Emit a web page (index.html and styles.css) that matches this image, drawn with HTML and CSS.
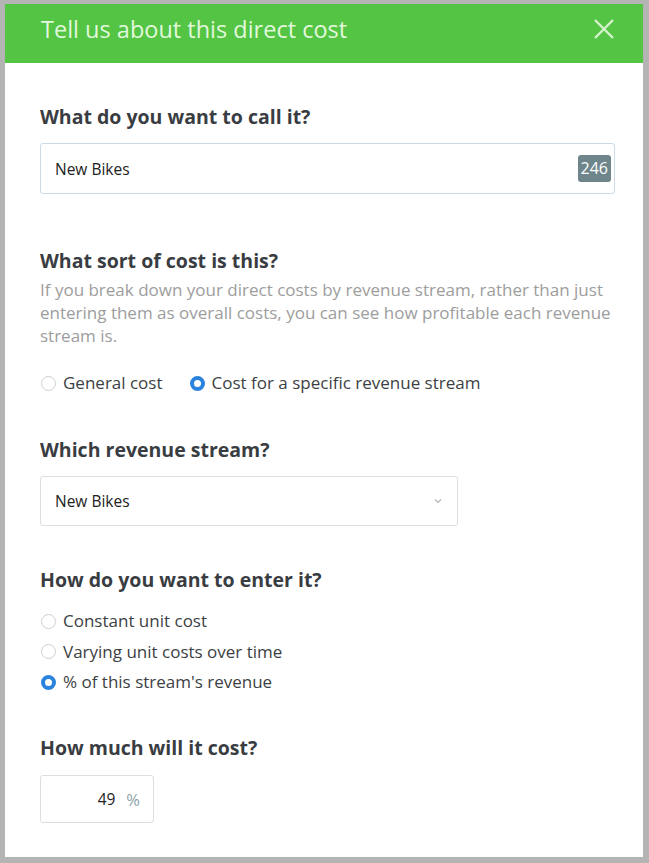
FILE: index.html
```html
<!DOCTYPE html>
<html>
<head>
<meta charset="utf-8">
<link rel="stylesheet" href="styles.css">
</head>
<body>
<div class="modal">
  <div class="header">
    <span class="title">Tell us about this direct cost</span>
    <svg class="close" width="22" height="22" viewBox="0 0 22 22"><path d="M2 2 L20 20 M20 2 L2 20" stroke="#d4f3cc" stroke-width="2.4" fill="none"/></svg>
  </div>
  <div class="body">
    <section class="field f-name">
      <h2 class="label">What do you want to call it?</h2>
      <div class="input wide">
        <span class="val">New Bikes</span>
        <span class="badge">246</span>
      </div>
    </section>

    <section class="field f-sort">
      <h2 class="label">What sort of cost is this?</h2>
      <p class="help">If you break down your direct costs by revenue stream, rather than just entering them as overall costs, you can see how profitable each revenue stream is.</p>
      <div class="radios inline">
        <label class="radio"><span class="dot"></span>General cost</label>
        <label class="radio on"><span class="dot"></span>Cost for a specific revenue stream</label>
      </div>
    </section>

    <section class="field f-stream">
      <h2 class="label">Which revenue stream?</h2>
      <div class="input select">
        <span class="val">New Bikes</span>
        <svg class="chev" width="8" height="6" viewBox="0 0 8 6"><path d="M1 1.5 L4 4.5 L7 1.5" stroke="#b5b5b5" stroke-width="1.2" fill="none"/></svg>
      </div>
    </section>

    <section class="field f-enter">
      <h2 class="label">How do you want to enter it?</h2>
      <div class="radios stack">
        <label class="radio"><span class="dot"></span>Constant unit cost</label>
        <label class="radio"><span class="dot"></span>Varying unit costs over time</label>
        <label class="radio on"><span class="dot"></span>% of this stream's revenue</label>
      </div>
    </section>

    <section class="field f-cost">
      <h2 class="label">How much will it cost?</h2>
      <div class="input small">
        <span class="num">49</span>
        <span class="pct">%</span>
      </div>
    </section>
  </div>
</div>
</body>
</html>
```

FILE: styles.css
```css
html, body {
  margin: 0;
  padding: 0;
}
body {
  background: #b4b4b4;
  font-family: "Open Sans", "Noto Sans", sans-serif;
  width: 649px;
  height: 863px;
  overflow: hidden;
}
.modal {
  margin: 4px 6px 0 5px;
  height: 853px;
  background: #ffffff;
  display: flex;
  flex-direction: column;
}
.header {
  box-sizing: border-box;
  height: 59px;
  background: #53c443;
  display: flex;
  align-items: center;
  justify-content: space-between;
  padding: 0 28px 10px 36px;
}
.title {
  color: #e2f8dc;
  font-size: 23.5px;
  font-weight: 400;
  line-height: 30px;
}
.close {
  display: block;
}
.body {
  padding: 0 28px 0 35px;
}
.field {
  display: flex;
  flex-direction: column;
}
.label {
  margin: 0;
  font-size: 19.5px;
  font-weight: 700;
  color: #393d42;
  line-height: 26px;
}
.f-name { margin-top: 41px; }
.f-sort { margin-top: 54px; }
.f-stream { margin-top: 43px; }
.f-enter { margin-top: 41px; }
.f-cost { margin-top: 42px; }

.input {
  box-sizing: border-box;
  border: 1px solid #dadfe3;
  border-radius: 3px;
  background: #fff;
  display: flex;
  align-items: center;
  font-size: 15.5px;
  color: #222;
}
.input.wide {
  margin-top: 13px;
  height: 51px;
  width: 575px;
  border-color: #c9dbe9;
  padding: 0 3px 0 14px;
  justify-content: space-between;
}
.badge {
  background: #6e858b;
  color: #fff;
  font-size: 16px;
  border-radius: 3px;
  height: 27px;
  line-height: 27px;
  padding: 0 3px;
}
.help {
  margin: 4px 0 0;
  font-size: 17px;
  line-height: 23px;
  color: #9d9d9d;
  max-width: 580px;
}
.radios.inline {
  display: flex;
  gap: 26px;
  margin-top: 25px;
}
.radios.stack {
  display: flex;
  flex-direction: column;
  gap: 8.5px;
  margin-top: 17px;
}
.radio {
  display: flex;
  align-items: center;
  font-size: 17px;
  color: #3c3f44;
  line-height: 22px;
}
.dot {
  box-sizing: border-box;
  width: 15px;
  height: 15px;
  border-radius: 50%;
  border: 1px solid #cfcfcf;
  background: #fff;
  margin-right: 7px;
  margin-left: 1px;
}
.radio.on .dot {
  border: 4.5px solid #2a83dd;
  background: #fff;
}
.input.select {
  margin-top: 13px;
  height: 50px;
  width: 418px;
  padding: 0 15px 0 14px;
  justify-content: space-between;
}
.chev { display: block; }
.input.small {
  margin-top: 14px;
  height: 48px;
  width: 114px;
  padding: 0 13px 0 0;
  justify-content: flex-end;
}
.num { color: #222; }
.pct { color: #8aa2aa; margin-left: 11px; font-size: 16.5px; }
```
